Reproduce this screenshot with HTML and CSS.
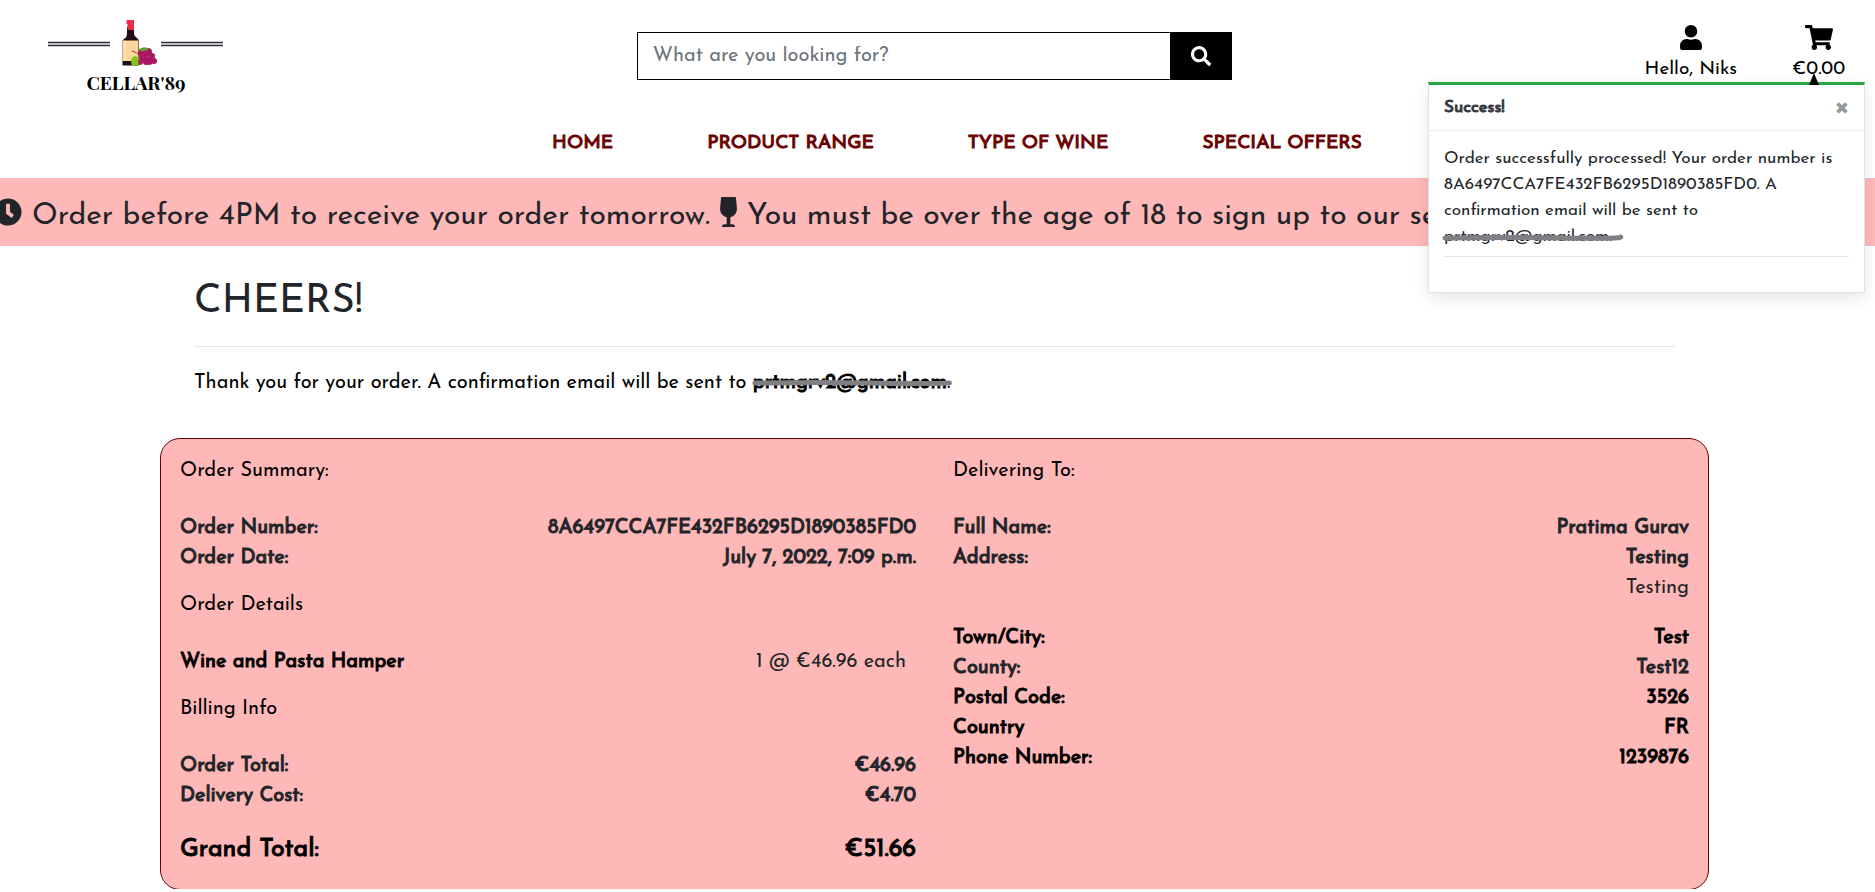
FILE: index.html
```html
<!DOCTYPE html>
<html lang="en">
<head>
<meta charset="utf-8">
<meta name="viewport" content="width=device-width, initial-scale=1">
<title>Cellar'89 - Order Confirmation</title>
<link rel="stylesheet" href="styles.css">
</head>
<body>
<header class="site-header">
  <div class="top-bar">
    <a class="logo" href="#" aria-label="Cellar'89 home">
      <svg class="logo-art" viewBox="0 0 176 52" aria-hidden="true">
        <path d="M0 26.500H62M0 29.500H62M113 26.500H175M113 29.500H175" stroke="#332c3a" stroke-width="1.300" fill="none"/>
        <path d="M0 28H62M113 28H175" stroke="#bdb8c0" stroke-width="1.400"/>
        <path d="M79 11h7v7q0 2 3 4 2 1 2 4v23.500H74.500V26q0-3 3-4 1.500-2 1.500-4z" fill="#220a18"/>
        <path d="M78.500 4h7.500v10h-6.500V8h-1z" fill="#ec2d45"/>
        <path d="M74.500 24.500h16v20.500H74.500z" fill="#fbd79b"/>
        <path d="M77 24.500v20.500" stroke="#fff0d2"/>
        <g fill="#a91765"><circle cx="94" cy="37" r="4"/><circle cx="100" cy="36" r="4"/><circle cx="104" cy="40" r="3"/><circle cx="106" cy="45" r="3"/><circle cx="101" cy="45" r="4"/><circle cx="96" cy="42" r="5"/><circle cx="92" cy="46" r="3"/><circle cx="98" cy="46" r="3"/></g>
        <path d="M90 34q6-5 11-1-5 4-11 1z" fill="#5d9c32"/>
        <path d="M84 35q5 1 8 5" stroke="#a62c35" fill="none"/>
        <path d="M83 46q0-6 5-6l3 3-1 3 1 4-4-1-3 1z" fill="#80c51c"/>
      </svg>
      <span class="logo-name">CELLAR'89</span>
    </a>
    <form class="search" role="search">
      <input class="search-input" type="search" aria-label="Search" placeholder="What are you looking for?">
      <button class="search-button" type="button" aria-label="Search">
        <svg viewBox="0 0 512 512" width="20" height="20" aria-hidden="true"><path fill="currentColor" d="M505 442.700 405.300 343c-4.500-4.500-10.600-7-17-7H372c27.600-35.300 44-79.700 44-128C416 93.100 322.900 0 208 0S0 93.100 0 208s93.100 208 208 208c48.300 0 92.700-16.400 128-44v16.300c0 6.400 2.500 12.500 7 17l99.700 99.700c9.400 9.400 24.600 9.400 33.900 0l28.300-28.300c9.400-9.400 9.400-24.600.1-34zM208 336c-70.700 0-128-57.200-128-128 0-70.700 57.200-128 128-128 70.700 0 128 57.200 128 128 0 70.700-57.200 128-128 128z"/></svg>
      </button>
    </form>
    <div class="account">
      <a class="account-link" href="#">
        <svg viewBox="0 0 448 512" width="22" height="25" aria-hidden="true"><path fill="currentColor" d="M224 256c70.700 0 128-57.300 128-128S294.700 0 224 0 96 57.300 96 128s57.300 128 128 128zm89.600 32h-16.700c-22.200 10.200-46.900 16-72.900 16s-50.600-5.800-72.900-16h-16.700C60.200 288 0 348.200 0 422.400V464c0 26.500 21.500 48 48 48h352c26.500 0 48-21.500 48-48v-41.600c0-74.200-60.200-134.400-134.400-134.400z"/></svg>
        <span>Hello, Niks</span>
      </a>
      <a class="account-link" href="#">
        <svg viewBox="0 0 576 512" width="28" height="25" aria-hidden="true"><path fill="currentColor" d="M528.100 301.300l47.300-208C578.800 78.300 567.400 64 552 64H159.200l-9.200-44.800C147.800 8 137.900 0 126.500 0H24C10.700 0 0 10.700 0 24v16c0 13.300 10.700 24 24 24h69.900l70.200 343.400C147.300 417.100 136 435.200 136 456c0 30.900 25.100 56 56 56s56-25.100 56-56c0-15.700-6.400-29.800-16.800-40h209.600C430.400 426.200 424 440.300 424 456c0 30.900 25.100 56 56 56s56-25.100 56-56c0-22.200-12.900-41.300-31.600-50.400l5.500-24.300c3.400-15-8-29.300-23.400-29.300H218.100l-6.500-32h293.100c11.200 0 20.900-7.800 23.400-18.700z"/></svg>
        <span>€0.00</span>
      </a>
    </div>
  </div>
  <nav class="main-nav" aria-label="Main">
    <a href="#">HOME</a>
    <a href="#">PRODUCT RANGE</a>
    <a href="#">TYPE OF WINE</a>
    <a href="#">SPECIAL OFFERS</a>
  </nav>
</header>

<section class="toast" role="status">
  <header class="toast-header">
    <strong>Success!</strong>
    <button class="toast-close" type="button" aria-label="Close">✖</button>
  </header>
  <div class="toast-body">
    <p>Order successfully processed! Your order number is 8A6497CCA7FE432FB6295D1890385FD0. A confirmation email will be sent to <span class="redacted">prtmgrv2@gmail.com.<svg viewBox="0 0 170 10" preserveAspectRatio="none" aria-hidden="true"><path d="M1 6Q60 5 120 6T179 5"/></svg></span></p>
    <hr>
  </div>
</section>

<div class="banner">
  <p class="banner-text">
    <svg viewBox="0 0 512 512" width="28" height="28" aria-hidden="true"><path fill="currentColor" d="M256 8C119 8 8 119 8 256s111 248 248 248 248-111 248-248S393 8 256 8zm57.100 350.100L224.900 294c-3.100-2.300-4.900-5.900-4.900-9.700V116c0-6.600 5.400-12 12-12h48c6.600 0 12 5.400 12 12v137.700l63.500 46.200c5.400 3.900 6.500 11.400 2.600 16.800l-28.200 38.800c-3.900 5.300-11.400 6.500-16.800 2.600z"/></svg>
    <span>Order before 4PM to receive your order tomorrow.</span>
    <svg viewBox="0 0 288 512" width="17" height="30" aria-hidden="true"><path fill="currentColor" d="M216 464h-40V346.800c68.500-15.900 118-79.800 111.400-154L271.600 14.500C270.900 6.300 264.100 0 256 0H32C23.900 0 17.100 6.300 16.400 14.500L.6 192.800C-6 267 43.500 330.900 112 346.800V464H72c-22.100 0-40 17.900-40 40 0 4.400 3.600 8 8 8h208c4.400 0 8-3.600 8-8 0-22.100-17.900-40-40-40z"/></svg>
    <span>You must be over the age of 18 to sign up to our services.</span>
  </p>
</div>

<main class="page">
  <div class="intro">
    <h1>CHEERS!</h1>
    <hr>
    <p>Thank you for your order. A confirmation email will be sent to <strong class="redacted">prtmgrv2@gmail.com<svg viewBox="0 0 180 10" preserveAspectRatio="none" aria-hidden="true"><path d="M2 5Q60 4 110 5T182 5"/></svg></strong>.</p>
  </div>

  <div class="order-card">
    <section class="order-column">
      <h2>Order Summary:</h2>
      <dl>
        <div><dt>Order Number:</dt><dd>8A6497CCA7FE432FB6295D1890385FD0</dd></div>
        <div><dt>Order Date:</dt><dd>July 7, 2022, 7:09 p.m.</dd></div>
      </dl>
      <h2>Order Details</h2>
      <dl>
        <div class="order-item"><dt>Wine and Pasta Hamper</dt><dd>1 @ €46.96 each</dd></div>
      </dl>
      <h2>Billing Info</h2>
      <dl>
        <div><dt>Order Total:</dt><dd>€46.96</dd></div>
        <div><dt>Delivery Cost:</dt><dd>€4.70</dd></div>
        <div class="grand-total"><dt>Grand Total:</dt><dd>€51.66</dd></div>
      </dl>
    </section>
    <section class="order-column">
      <h2>Delivering To:</h2>
      <dl>
        <div><dt>Full Name:</dt><dd>Pratima Gurav</dd></div>
        <div><dt>Address:</dt><dd>Testing<span class="address-extra">Testing</span></dd></div>
      </dl>
      <dl>
        <div class="strong-row"><dt>Town/City:</dt><dd>Test</dd></div>
        <div><dt>County:</dt><dd>Test12</dd></div>
        <div class="strong-row"><dt>Postal Code:</dt><dd>3526</dd></div>
        <div class="strong-row"><dt>Country</dt><dd>FR</dd></div>
        <div class="strong-row"><dt>Phone Number:</dt><dd>1239876</dd></div>
      </dl>
    </section>
  </div>
</main>
</body>
</html>
```

FILE: styles.css
```css
*, *::before, *::after { box-sizing: border-box; }

body {
  position: relative;
  margin: 0;
  background: #fff;
  color: #212529;
  font-family: "Josefin Sans", Lato, sans-serif;
  font-size: 20px;
  font-weight: 400;
  line-height: 30px;
  overflow-x: hidden;
}

h1, h2, p, dl, dd { margin: 0; }
a { color: inherit; text-decoration: none; }
svg { display: block; }

/* Heavier strokes that keep the regular weight's letter widths */
strong,
dl,
.main-nav {
  font-weight: 400;
  -webkit-text-stroke: 1px currentColor;
}

hr {
  margin: 0;
  border: 0;
  border-top: 1px solid #e5e5e5;
}

.top-bar {
  display: grid;
  grid-template-columns: 24fr 595px 25fr;
  padding: 16px 30px 0 48px;
  height: 96px;
  color: #000;
}

.logo {
  display: flex;
  flex-direction: column;
  align-items: center;
  justify-self: start;
  width: 176px;
}

.logo-art { width: 176px; height: 52px; }

.logo-name {
  font-family: "Playfair Display", "DejaVu Serif", serif;
  font-size: 19px;
  font-weight: 700;
  line-height: 28px;
}

.search {
  display: flex;
  height: 48px;
  margin-top: 16px;
}

.search-input {
  flex: 1;
  min-width: 0;
  padding: 0 15px;
  border: 1px solid #000;
  border-radius: 0;
  background: #fff;
  font: inherit;
}

.search-input::placeholder { color: #6c757d; opacity: 1; }

.search-button {
  display: grid;
  place-items: center;
  width: 61px;
  border: 0;
  background: #000;
  color: #fff;
}

.account {
  display: flex;
  justify-self: end;
  gap: 55px;
  padding-top: 9px;
}

.account-link {
  display: flex;
  flex-direction: column;
  align-items: center;
  gap: 5px;
  font-size: 19px;
}

.main-nav {
  display: flex;
  justify-content: center;
  gap: 94px;
  padding: 33px 0 19px 39px;
  color: #6b0000;
  font-size: 19px;
}

.banner {
  overflow: hidden;
  background: #ffb8b8;
}

.banner-text {
  display: flex;
  align-items: center;
  gap: 10px;
  height: 68px;
  margin-left: -6px;
  font-size: 30px;
  white-space: nowrap;
}

.banner-text svg { flex: none; }
.banner-text span { padding-top: 9px; }

.toast {
  position: absolute;
  z-index: 2;
  top: 82px;
  right: 10px;
  width: 437px;
  height: 211px;
  border: 1px solid #e2e2e2;
  border-top: 3px solid #28a745;
  background: #fff;
  box-shadow: 0 5px 15px rgba(0, 0, 0, 0.1);
  font-size: 17px;
  line-height: 26px;
}

.toast::before {
  content: "";
  position: absolute;
  right: 45px;
  bottom: 100%;
  border: 5px solid transparent;
  border-top: 0;
  border-bottom: 12px solid #000;
}

.toast-header {
  display: flex;
  justify-content: space-between;
  align-items: center;
  height: 46px;
  padding: 0 15px;
  border-bottom: 1px solid #ebebeb;
  color: #343a40;
}

.toast-close {
  padding: 0;
  border: 0;
  background: none;
  color: #98999b;
  font-family: "DejaVu Sans", sans-serif;
  font-size: 17px;
}

.toast-body { padding: 15px; }
.toast-body hr { margin-top: 6px; }

.redacted {
  position: relative;
  display: inline-block;
}

.redacted svg {
  position: absolute;
  top: 50%;
  left: 0;
  width: 100%;
  height: 10px;
  overflow: visible;
  margin-top: -5px;
}

.redacted path {
  fill: none;
  stroke: #7f8084;
  stroke-width: 5;
  stroke-linecap: round;
}

.page { padding: 32px 166px 3px 160px; }

.intro { padding: 0 34px; }

h1 {
  font-size: 40px;
  font-weight: 400;
  line-height: 48px;
}

.intro hr { margin: 20px 0 21px; }
.intro p { color: #000; }

.order-card {
  display: grid;
  grid-template-columns: 1fr 1fr;
  gap: 37px;
  margin-top: 40px;
  padding: 17px 19px 21px;
  border: 1px solid #6b0000;
  border-radius: 20px;
  background: #ffb8b8;
  clip-path: inset(0 0 1px);
}

h2 {
  margin-bottom: 27px;
  color: #000;
  font-size: 20px;
  font-weight: 400;
}

dl { margin-bottom: 17px; }
dl:last-child { margin-bottom: 0; }

dl > div {
  display: flex;
  justify-content: space-between;
}

dd { text-align: right; }

.order-column dl + dl { margin-top: 20px; }

.order-item { color: #000; }

.order-item dd,
.address-extra { -webkit-text-stroke: 0; }

.order-item dd {
  padding-right: 10px;
  color: #212529;
}

.address-extra { display: block; }

.strong-row { color: #000; }

.grand-total {
  margin-top: 21px;
  color: #000;
  font-size: 25px;
  line-height: 36px;
}
```
